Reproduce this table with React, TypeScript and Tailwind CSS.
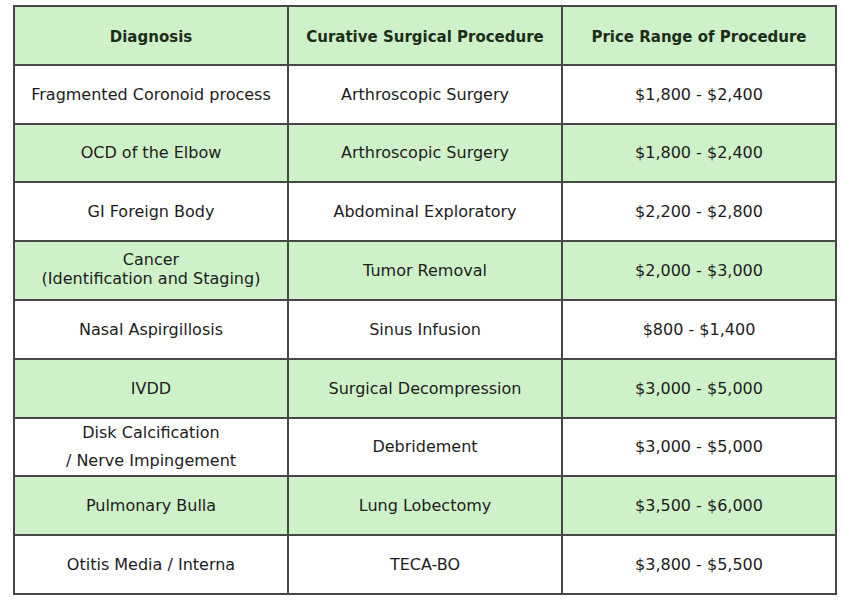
const rows: { diagnosis: string[]; procedure: string; price: string; wide?: boolean }[] = [
  { diagnosis: ["Fragmented Coronoid process"], procedure: "Arthroscopic Surgery", price: "$1,800 - $2,400" },
  { diagnosis: ["OCD of the Elbow"], procedure: "Arthroscopic Surgery", price: "$1,800 - $2,400" },
  { diagnosis: ["GI Foreign Body"], procedure: "Abdominal Exploratory", price: "$2,200 - $2,800" },
  { diagnosis: ["Cancer", "(Identification and Staging)"], procedure: "Tumor Removal", price: "$2,000 - $3,000" },
  { diagnosis: ["Nasal Aspirgillosis"], procedure: "Sinus Infusion", price: "$800 - $1,400" },
  { diagnosis: ["IVDD"], procedure: "Surgical Decompression", price: "$3,000 - $5,000" },
  { diagnosis: ["Disk Calcification", "/ Nerve Impingement"], procedure: "Debridement", price: "$3,000 - $5,000", wide: true },
  { diagnosis: ["Pulmonary Bulla"], procedure: "Lung Lobectomy", price: "$3,500 - $6,000" },
  { diagnosis: ["Otitis Media / Interna"], procedure: "TECA-BO", price: "$3,800 - $5,500" }
];

export default function App() {
  return (
    <div className="min-h-[611px] w-[865px] bg-white pl-[13px] pt-[5px] font-['DejaVu_Sans',sans-serif] text-[16px] text-[#1c1c1c]">
      <table className="w-[822px] table-fixed border-collapse border-2 border-[#474747] text-center">
        <colgroup>
          <col className="w-[274px]" />
          <col className="w-[274px]" />
          <col className="w-[274px]" />
        </colgroup>
        <thead>
          <tr className="h-[58.8px] bg-[#cff1c9] text-[15px] text-[#1c2e1a]">
            <th className="border-2 border-[#474747] pt-[3px] font-bold">Diagnosis</th>
            <th className="border-2 border-[#474747] pt-[3px] font-bold">Curative Surgical Procedure</th>
            <th className="border-2 border-[#474747] pt-[3px] font-bold">Price Range of Procedure</th>
          </tr>
        </thead>
        <tbody>
          {rows.map((row, i) => (
            <tr key={row.procedure + i} className={i % 2 === 1 ? "h-[58.8px] bg-[#cff1c9]" : "h-[58.8px] bg-white"}>
              <td
                className={
                  row.wide
                    ? "border-2 border-[#474747] leading-[28px]"
                    : row.diagnosis.length > 1
                      ? "border-2 border-[#474747] pb-[3px] leading-[19px]"
                      : "border-2 border-[#474747] pt-[1px]"
                }
              >
                {row.diagnosis.map((line) => (
                  <div key={line}>{line}</div>
                ))}
              </td>
              <td className="border-2 border-[#474747] pt-[1px]">{row.procedure}</td>
              <td className="border-2 border-[#474747] pt-[1px]">{row.price}</td>
            </tr>
          ))}
        </tbody>
      </table>
    </div>
  );
}
